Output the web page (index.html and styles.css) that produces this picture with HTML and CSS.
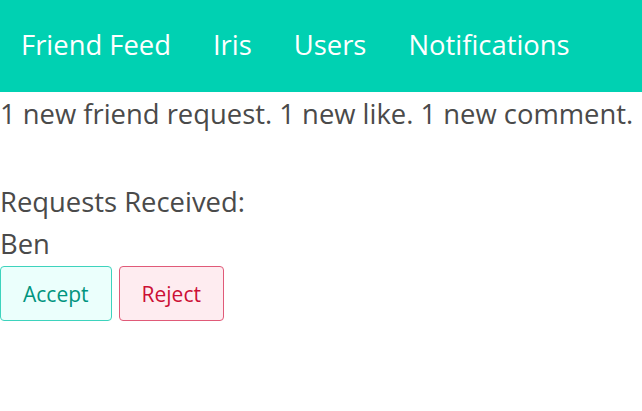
FILE: index.html
```html
<!DOCTYPE html>
<html>
<head>
<meta charset="utf-8">
<link rel="stylesheet" href="styles.css">
</head>
<body>
<nav class="navbar">
  <a class="navbar-item">Friend Feed</a>
  <a class="navbar-item">Iris</a>
  <a class="navbar-item">Users</a>
  <a class="navbar-item">Notifications</a>
</nav>
<main class="content">
  <p class="line first">1 new friend request. 1 new like. 1 new comment.</p>
  <div class="spacer"></div>
  <p class="line">Requests Received:</p>
  <p class="line">Ben</p>
  <div class="buttons">
    <button class="button accept">Accept</button>
    <button class="button reject">Reject</button>
  </div>
</main>
</body>
</html>
```
FILE: styles.css
```css
html, body {
  margin: 0;
  padding: 0;
  background: #fff;
}
body {
  font-family: "Open Sans", "Noto Sans", sans-serif;
  font-size: 27.4px;
  line-height: 42px;
  color: #4a4a4a;
}
.navbar {
  display: flex;
  align-items: center;
  box-sizing: border-box;
  height: 92px;
  padding-bottom: 3px;
  background: #00d1b2;
}
.navbar-item {
  color: #fff;
  padding: 0 21px;
  line-height: 42px;
}
.content {
  display: flex;
  flex-direction: column;
}
.line {
  margin: 0;
  white-space: nowrap;
}
.first {
  padding-top: 1px;
}
.spacer {
  height: 46px;
}
.buttons {
  display: flex;
  gap: 7px;
  padding-top: 1px;
}
.button {
  font-family: inherit;
  font-size: 21px;
  height: 55px;
  padding: 0 22px;
  border-radius: 4px;
  border: 1px solid;
  cursor: pointer;
}
.accept {
  background: #ebfffc;
  border-color: #3dd3bd;
  color: #00947e;
}
.reject {
  background: #feecf0;
  border-color: #e05a78;
  color: #cc0f35;
}
```
